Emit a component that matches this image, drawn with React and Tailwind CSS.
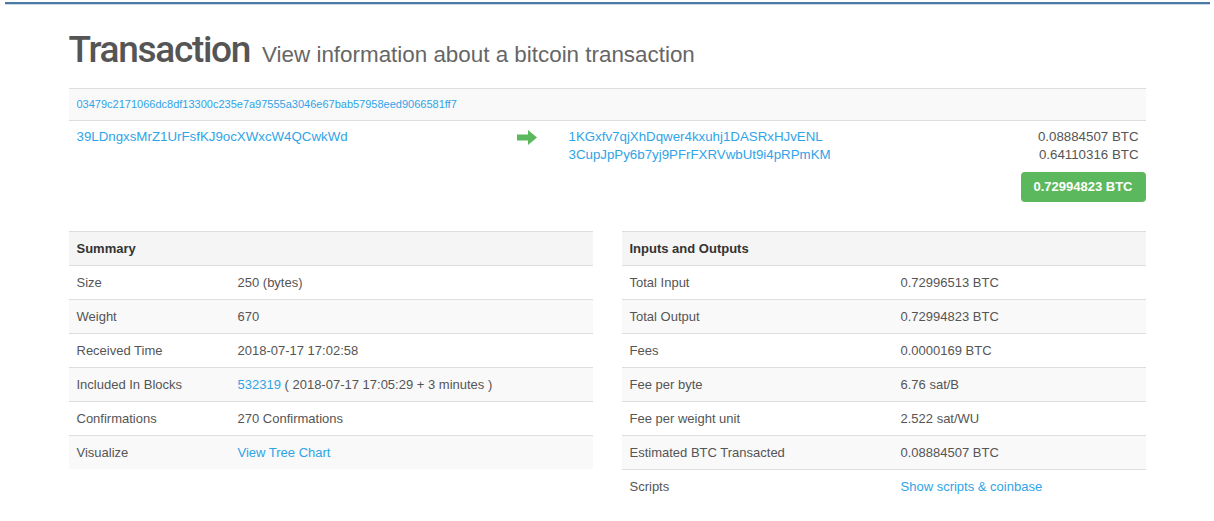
import React from "react";

const summary = [
  ["Size", "250 (bytes)"],
  ["Weight", "670"],
  ["Received Time", "2018-07-17 17:02:58"],
  [
    "Included In Blocks",
    <>
      <a className="text-[#2fa4e7]">532319</a> ( 2018-07-17 17:05:29 + 3 minutes )
    </>,
  ],
  ["Confirmations", "270 Confirmations"],
  ["Visualize", <a className="text-[#2fa4e7]">View Tree Chart</a>],
];

const inout = [
  ["Total Input", "0.72996513 BTC"],
  ["Total Output", "0.72994823 BTC"],
  ["Fees", "0.0000169 BTC"],
  ["Fee per byte", "6.76 sat/B"],
  ["Fee per weight unit", "2.522 sat/WU"],
  ["Estimated BTC Transacted", "0.08884507 BTC"],
  ["Scripts", <a className="text-[#2fa4e7]">Show scripts &amp; coinbase</a>],
];

function Arrow() {
  return (
    <svg width="20" height="15" viewBox="0 0 20 15">
      <path d="M0 4.5h11V0l9 7.5-9 7.5v-4.5H0z" fill="#5cb85c" />
    </svg>
  );
}

function InfoTable({ title, rows, labelWidth }) {
  return (
    <div className="w-[524px]">
      <div className="flex h-[34px] items-center border-t border-[#ddd] bg-[#f5f5f5] px-2 font-bold text-[#333]">
        {title}
      </div>
      {rows.map(([label, value], i) => (
        <div
          key={label}
          className={`flex h-[34px] items-center border-t border-[#ddd] px-2 ${i % 2 === 1 ? "bg-[#f9f9f9]" : "bg-white"}`}
        >
          <div style={{ width: labelWidth }} className="shrink-0">
            {label}
          </div>
          <div>{value}</div>
        </div>
      ))}
    </div>
  );
}

export default function App() {
  return (
    <div className="min-h-[521px] bg-white text-[13px] text-[#555]" style={{ fontFamily: '"Liberation Sans", Arial, sans-serif' }}>
      <div className="pt-[2px] pl-[5px] pr-[4px]">
        <div className="h-[2px] bg-[#4b78a5]" />
        <div className="h-px bg-[#c9d8e8]" />
      </div>

      <div className="mx-auto w-[1077px]">
        <h1 className="mt-[26px] flex items-baseline gap-[12px] leading-none text-[#555]">
          <span className="font-['Roboto',sans-serif] text-[37px] font-medium tracking-[-1.3px]">Transaction</span>
          <span className="text-[22.4px] text-[#666]">View information about a bitcoin transaction</span>
        </h1>

        <div className="mt-[20px] flex h-[33px] items-center border-y border-[#ddd] bg-[#f9f9f9] px-2 text-[11px] text-[#2fa4e7]">
          03479c2171066dc8df13300c235e7a97555a3046e67bab57958eed9066581ff7
        </div>

        <div className="flex pt-[7px] leading-[18px] text-[13.3px]">
          <div className="w-[448px] pl-2 text-[#2fa4e7]">39LDngxsMrZ1UrFsfKJ9ocXWxcW4QCwkWd</div>
          <div className="w-[52px] pt-[2px]">
            <Arrow />
          </div>
          <div className="flex-1 pr-[7px]">
            <div className="flex justify-between">
              <a className="text-[#2fa4e7]">1KGxfv7qjXhDqwer4kxuhj1DASRxHJvENL</a>
              <span>0.08884507 BTC</span>
            </div>
            <div className="flex justify-between">
              <a className="text-[#2fa4e7]">3CupJpPy6b7yj9PFrFXRVwbUt9i4pRPmKM</a>
              <span>0.64110316 BTC</span>
            </div>
          </div>
        </div>
        <div className="mt-[8px] flex justify-end">
          <div className="flex h-[30px] w-[125px] items-center justify-center rounded-[4px] bg-[#5cb85c] font-bold text-white">
            0.72994823 BTC
          </div>
        </div>

        <div className="mt-[29px] flex justify-between">
          <InfoTable title="Summary" rows={summary} labelWidth={161} />
          <InfoTable title="Inputs and Outputs" rows={inout} labelWidth={271} />
        </div>
      </div>
    </div>
  );
}
